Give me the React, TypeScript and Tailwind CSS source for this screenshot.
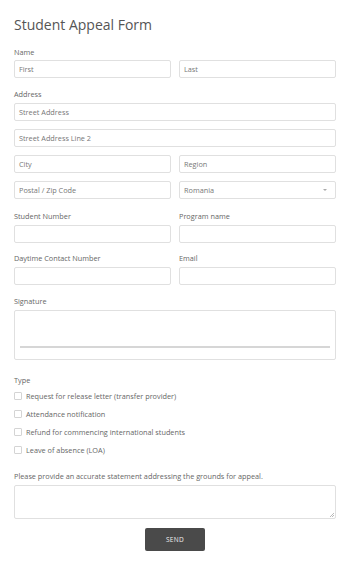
import React from 'react';

const font = { fontFamily: '"Open Sans", "Liberation Sans", sans-serif' };

function Label({ children, className = '' }: { children: React.ReactNode; className?: string }) {
  return <div className={`h-[10px] text-[7.3px] leading-[10px] text-[#666] ${className}`}>{children}</div>;
}

function Field({ placeholder = '', children }: { placeholder?: string; children?: React.ReactNode }) {
  return (
    <div className="relative flex h-[18px] items-center rounded-[2px] border border-[#e0e0e0] bg-white px-[4px] text-[7.3px] text-[#777]">
      {placeholder}
      {children}
    </div>
  );
}

const TYPES = [
  'Request for release letter (transfer provider)',
  'Attendance notification',
  'Refund for commencing international students',
  'Leave of absence (LOA)',
];

export default function App() {
  return (
    <div className="h-[565px] w-[350px] bg-white px-[14px]" style={font}>
      <h1 className="pt-[14px] text-[14px] leading-[22px] text-[#555]">Student Appeal Form</h1>

      <Label className="mt-[11px]">Name</Label>
      <div className="mt-[3px] grid grid-cols-2 gap-[8px]">
        <Field placeholder="First" />
        <Field placeholder="Last" />
      </div>

      <Label className="mt-[11px]">Address</Label>
      <div className="mt-[4px] flex flex-col gap-[8px]">
        <Field placeholder="Street Address" />
        <Field placeholder="Street Address Line 2" />
        <div className="grid grid-cols-2 gap-[8px]">
          <Field placeholder="City" />
          <Field placeholder="Region" />
        </div>
        <div className="grid grid-cols-2 gap-[8px]">
          <Field placeholder="Postal / Zip Code" />
          <Field placeholder="Romania">
            <span className="absolute right-[8px] top-[7px] h-0 w-0 border-x-[2.5px] border-t-[2.5px] border-x-transparent border-t-[#aaa]" />
          </Field>
        </div>
      </div>

      <div className="mt-[12px] grid grid-cols-2 gap-x-[8px]">
        <div>
          <Label>Student Number</Label>
          <div className="mt-[4px]">
            <Field />
          </div>
        </div>
        <div>
          <Label>Program name</Label>
          <div className="mt-[4px]">
            <Field />
          </div>
        </div>
      </div>

      <div className="mt-[10px] grid grid-cols-2 gap-x-[8px]">
        <div>
          <Label>Daytime Contact Number</Label>
          <div className="mt-[4px]">
            <Field />
          </div>
        </div>
        <div>
          <Label>Email</Label>
          <div className="mt-[4px]">
            <Field />
          </div>
        </div>
      </div>

      <Label className="mt-[11px]">Signature</Label>
      <div className="mt-[4px] flex h-[50px] items-end rounded-[2px] border border-[#e0e0e0] px-[5px] pb-[11px]">
        <div className="h-[2px] w-full bg-[#d6d6d6]" />
      </div>

      <Label className="mt-[15px]">Type</Label>
      <div className="mt-[6px] flex flex-col gap-[8px]">
        {TYPES.map((t) => (
          <div key={t} className="flex h-[10px] items-center gap-[4px] text-[7.3px] text-[#666]">
            <span className="h-[8px] w-[8px] rounded-[1px] border border-[#d4d4d4] bg-white" />
            {t}
          </div>
        ))}
      </div>

      <Label className="mt-[16px]">Please provide an accurate statement addressing the grounds for appeal.</Label>
      <div className="relative mt-[4px] h-[34px] rounded-[2px] border border-[#e0e0e0]">
        <svg className="absolute bottom-[1px] right-[1px]" width="5" height="5" viewBox="0 0 5 5">
          <path d="M5 1 L1 5 M5 3 L3 5" stroke="#aaa" strokeWidth="0.8" />
        </svg>
      </div>

      <div className="mt-[9px] flex justify-center">
        <button
          type="button"
          className="h-[23px] w-[60px] rounded-[2px] bg-[#4a4a4a] text-[6.5px] tracking-[0.3px] text-[#eee]"
        >
          SEND
        </button>
      </div>
    </div>
  );
}
